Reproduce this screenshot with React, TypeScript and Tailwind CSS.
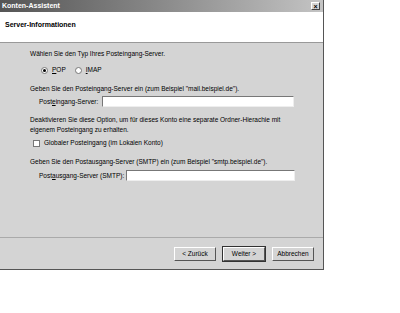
import React from 'react';

const font = { fontFamily: '"Liberation Sans", Arial, sans-serif' };

function Radio({ checked, label, u }: { checked?: boolean; label: string; u: string }) {
  return (
    <div className="flex items-center gap-[4px]">
      <span className="w-[7px] h-[7px] rounded-full bg-white border border-[#777] flex items-center justify-center">
        {checked && <span className="w-[3px] h-[3px] rounded-full bg-black" />}
      </span>
      <span>
        <span className="underline">{u}</span>
        {label}
      </span>
    </div>
  );
}

function Button({ children, strong }: { children: React.ReactNode; strong?: boolean }) {
  return (
    <div
      className={`w-[42px] h-[14px] flex items-center justify-center bg-[#d4d4d4] border-t border-l border-t-white border-l-white border-r border-b border-r-[#555] border-b-[#555] ${
        strong ? 'outline outline-1 outline-[#333]' : ''
      }`}
    >
      {children}
    </div>
  );
}

export default function App() {
  return (
    <div className="w-[400px] h-[313px] bg-white text-[6.5px] leading-[10px] text-black whitespace-nowrap" style={font}>
      <div className="w-[324px] h-[270px] flex flex-col bg-[#d4d4d4] border-r border-b border-r-[#555] border-b-[#555]">
        {/* Titelleiste */}
        <div className="h-[12px] flex items-center justify-between pl-[2px] pr-[3px] bg-gradient-to-r from-[#555] via-[#8a8a8a] to-[#c4c4c4]">
          <span className="text-white font-bold text-[7px]">Konten-Assistent</span>
          <span className="w-[9px] h-[8px] bg-[#d4d4d4] border-t border-l border-t-white border-l-white border-r border-b border-r-[#444] border-b-[#444] flex items-center justify-center text-[7px] leading-none font-bold">
            ×
          </span>
        </div>

        {/* Kopfbereich */}
        <div className="h-[31px] bg-white border-b border-b-[#999] pl-[5px] pt-[8px]">
          <span className="font-bold text-[7px]">Server-Informationen</span>
        </div>

        {/* Inhalt */}
        <div className="flex-1 flex flex-col pl-[30px] pt-[6px]">
          <p>Wählen Sie den Typ Ihres Posteingang-Server.</p>
          <div className="flex gap-[9px] mt-[6px] ml-[11px]">
            <Radio checked u="P" label="OP" />
            <Radio u="I" label="MAP" />
          </div>

          <p className="mt-[9px]">Geben Sie den Posteingang-Server ein (zum Beispiel "mail.beispiel.de").</p>
          <div className="flex items-center mt-[2px] ml-[9px]">
            <span className="w-[63px]">
              Post<span className="underline">e</span>ingang-Server:
            </span>
            <div className="w-[192px] h-[11px] bg-white border-t border-l border-t-[#777] border-l-[#777] border-r border-b border-r-[#eee] border-b-[#eee]" />
          </div>

          <p className="mt-[8px]">
            Deaktivieren Sie diese Option, um für dieses Konto eine separate Ordner-Hierachie mit
            <br />
            eigenem Posteingang zu erhalten.
          </p>
          <div className="flex items-center gap-[4px] mt-[3px] ml-[3px]">
            <span className="w-[7px] h-[7px] bg-white border border-[#777]" />
            <span>Globaler Posteingang (im Lokalen Konto)</span>
          </div>

          <p className="mt-[9px]">Geben Sie den Postausgang-Server (SMTP) ein (zum Beispiel "smtp.beispiel.de").</p>
          <div className="flex items-center mt-[3px] ml-[9px]">
            <span className="w-[87px]">
              Post<span className="underline">a</span>usgang-Server (SMTP):
            </span>
            <div className="w-[169px] h-[11px] bg-white border-t border-l border-t-[#777] border-l-[#777] border-r border-b border-r-[#eee] border-b-[#eee]" />
          </div>
        </div>

        {/* Schaltflächen */}
        <div className="h-[32px] border-t border-t-[#aaa] flex justify-end items-start gap-[7px] pt-[9px] pr-[9px]">
          <Button>&lt; Zurück</Button>
          <Button strong>Weiter &gt;</Button>
          <Button>Abbrechen</Button>
        </div>
      </div>
    </div>
  );
}
